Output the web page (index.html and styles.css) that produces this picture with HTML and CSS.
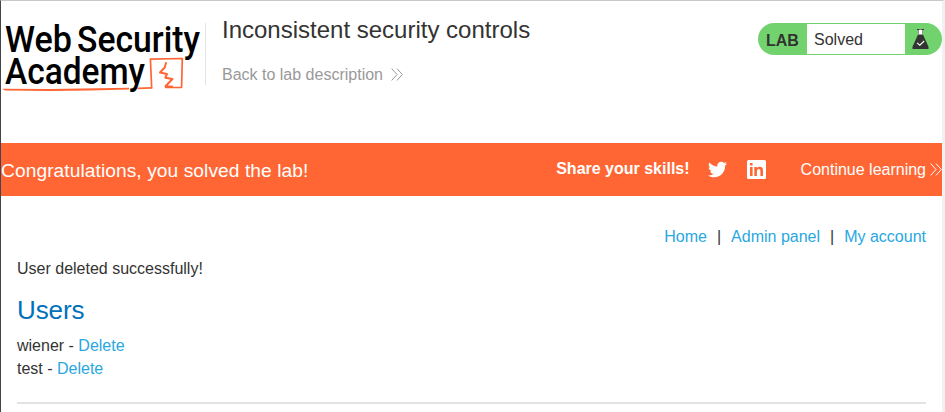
FILE: index.html
```html
<!DOCTYPE html>
<html lang="en">
<head>
<meta charset="utf-8">
<title>Inconsistent security controls</title>
<link rel="stylesheet" href="styles.css">
</head>
<body>
<div class="page">
  <header class="header">
    <svg class="logo" width="204" height="84" viewBox="1 16 204 84" role="img" aria-label="Web Security Academy">
      <g class="logo-text">
        <text x="5" y="51.7" textLength="67" lengthAdjust="spacingAndGlyphs">Web</text>
        <text x="77" y="51.7" textLength="123" lengthAdjust="spacingAndGlyphs">Security</text>
        <text x="5" y="84" textLength="140" lengthAdjust="spacingAndGlyphs">Academy</text>
      </g>
      <path class="logo-rule" d="M2 88.800 50 89 129 87.700v1.700L90 90.400 50 91 5 90.600Z"/>
      <path class="logo-rule" d="M138 87.400 152 87v1.800L137 89.200Z"/>
      <path class="logo-box" d="M151.700 88.500 150.400 59.200 182.300 58.500 181.600 87.300 165 87.500"/>
      <path class="logo-mark" d="M166.200 62.300 164.700 67.500 160 72.500 167 74 165.300 77.700 172.500 79 165.500 86.300 173 86.800"/>
    </svg>
    <div class="title">
      <h2>Inconsistent security controls</h2>
      <a class="back" href="#">Back to lab description
        <svg class="chevrons" width="12" height="13" viewBox="0 0 12 13"><path d="M.7.6 6 6.500.7 12.400M6 .6 11.300 6.500 6 12.400"/></svg>
      </a>
    </div>
    <div class="status">
      <span class="status-tag">LAB</span>
      <p class="status-text">Solved</p>
      <svg class="flask" width="17" height="21" viewBox="0 0 17 21">
        <path fill="#fff" d="M6 1h5v5H6z"/>
        <path fill="#333332" d="M5 0h2v1H5zM10 0h2v1h-2zM6 5.500h5L16.500 17.800V20H.5v-2.200Z"/>
        <path fill="#777" d="M7 0h3v1H7zM6 1h.8v4.500H6zM10.200 1h.8v4.500h-.8z"/>
        <path fill="none" stroke="#fff" stroke-width="1.100" d="M5 13.800 7.800 16.200 12.200 12"/>
      </svg>
    </div>
  </header>
  <section class="banner">
    <h4>Congratulations, you solved the lab!</h4>
    <div class="share">
      <span class="share-label">Share your skills!</span>
      <svg class="twitter" width="19" height="19" viewBox="0 0 24 24"><path d="M23.954 4.569c-.885.389-1.830.654-2.825.775 1.014-.611 1.794-1.574 2.163-2.723-.951.555-2.005.959-3.127 1.184-.896-.959-2.173-1.559-3.591-1.559-2.717 0-4.920 2.203-4.920 4.917 0 .390.045.765.127 1.124C7.691 8.094 4.066 6.130 1.640 3.161c-.427.722-.666 1.561-.666 2.475 0 1.710.870 3.213 2.188 4.096-.807-.026-1.566-.248-2.228-.616v.061c0 2.385 1.693 4.374 3.946 4.827-.413.111-.849.171-1.296.171-.314 0-.615-.030-.916-.086.631 1.953 2.445 3.377 4.604 3.417-1.680 1.319-3.809 2.105-6.102 2.105-.390 0-.779-.023-1.170-.067 2.189 1.394 4.768 2.209 7.557 2.209 9.054 0 13.999-7.496 13.999-13.986 0-.209 0-.420-.015-.630.961-.689 1.800-1.560 2.460-2.548z"/></svg>
      <svg class="linkedin" width="19" height="19" viewBox="0 0 19 19">
        <rect width="19" height="19" rx="1.500" fill="#fff"/>
        <path fill="#ff6633" d="M3 3h2.600v2.500H3zM3 7h2.600v9H3zM7.300 7h2.500v1.200C10.400 7.200 11.400 6.700 12.600 6.700c2.500 0 3.400 1.500 3.400 4V16h-2.600v-4.700c0-1.500-.4-2.300-1.600-2.300-1.300 0-1.900.9-1.900 2.400V16H7.300Z"/>
      </svg>
      <a class="continue" href="#">Continue learning
        <svg class="chevrons" width="12" height="13" viewBox="0 0 12 13"><path d="M.7.6 6 6.500.7 12.400M6 .6 11.300 6.500 6 12.400"/></svg>
      </a>
    </div>
  </section>
  <main class="content">
    <nav class="links"><a href="#">Home</a><span>|</span><a href="#">Admin panel</a><span>|</span><a href="#">My account</a></nav>
    <p class="message">User deleted successfully!</p>
    <h1>Users</h1>
    <div class="user">wiener - <a href="#">Delete</a></div>
    <div class="user">test - <a href="#">Delete</a></div>
    <hr>
  </main>
</div>
</body>
</html>
```
FILE: styles.css
```css
* { box-sizing: border-box; }
body {
  margin: 0;
  font: 16px/23px "Liberation Sans", Arial, sans-serif;
  color: #333332;
  background: #fff;
}
h1, h2, h4, p { margin: 0; font-weight: 400; }
a { color: #29a7e0; text-decoration: none; }
.page {
  height: 412px;
  overflow: hidden;
  border-top: 1px solid #c8c8c8;
  border-left: 1px solid #42464a;
  border-right: 3px solid #f1f1f1;
}
.header { display: flex; height: 142px; align-items: flex-start; }
.logo { display: block; margin-top: 15px; flex: none; overflow: visible; }
.logo-text { font: 500 37px Roboto, sans-serif; fill: #000; }
.logo-rule { fill: #ff6633; }
.logo-box { fill: none; stroke: #ff6633; stroke-width: 1.7; stroke-linejoin: round; }
.logo-mark { fill: none; stroke: #ff6633; stroke-width: 2; stroke-linejoin: round; }
.title {
  height: 62px;
  margin-top: 22px;
  padding-left: 16px;
  border-left: 1px solid #e5e5e5;
}
.title h2 { font-size: 24px; line-height: 28px; margin-top: -7px; white-space: nowrap; }
.back { display: flex; align-items: center; margin-top: 19px; gap: 8px; color: #999; }
.chevrons { fill: none; stroke: currentColor; stroke-width: 1; flex: none; }
.status {
  display: flex;
  align-items: center;
  width: 184px;
  height: 32px;
  margin: 22px 0 0 auto;
  border-radius: 16px;
  background: #72d36e;
}
.status-tag { width: 49px; padding-left: 8px; padding-top: 2px; font-weight: 700; }
.status-text { width: 98px; height: 30px; padding-left: 7px; line-height: 31px; background: #fff; }
.flask { margin-left: 7px; }
.banner {
  display: flex;
  align-items: center;
  justify-content: space-between;
  height: 53px;
  color: #fff;
  background: #ff6633;
}
.banner h4 { font-size: 19.200px; letter-spacing: 0.065px; padding-top: 2px; }
.share { display: flex; align-items: center; white-space: nowrap; }
.share-label { font-weight: 700; padding-bottom: 2px; }
.twitter { fill: #fff; margin-left: 18px; }
.linkedin { margin-left: 20px; }
.continue { display: flex; align-items: center; gap: 4px; margin-left: 35px; color: #fff; }
.content { padding: 29px 16px 0; }
.links { display: flex; justify-content: flex-end; }
.links span { margin: 0 10px; }
.message { margin-top: 9px; }
.content h1 { margin-top: 15px; font-size: 26px; letter-spacing: -0.1px; line-height: 30px; color: #0071ba; }
.content h1 + .user { margin-top: 9px; }
.content hr { height: 2px; margin: 22px 0 0; border: 0; background: #e3e3e3; }
```
